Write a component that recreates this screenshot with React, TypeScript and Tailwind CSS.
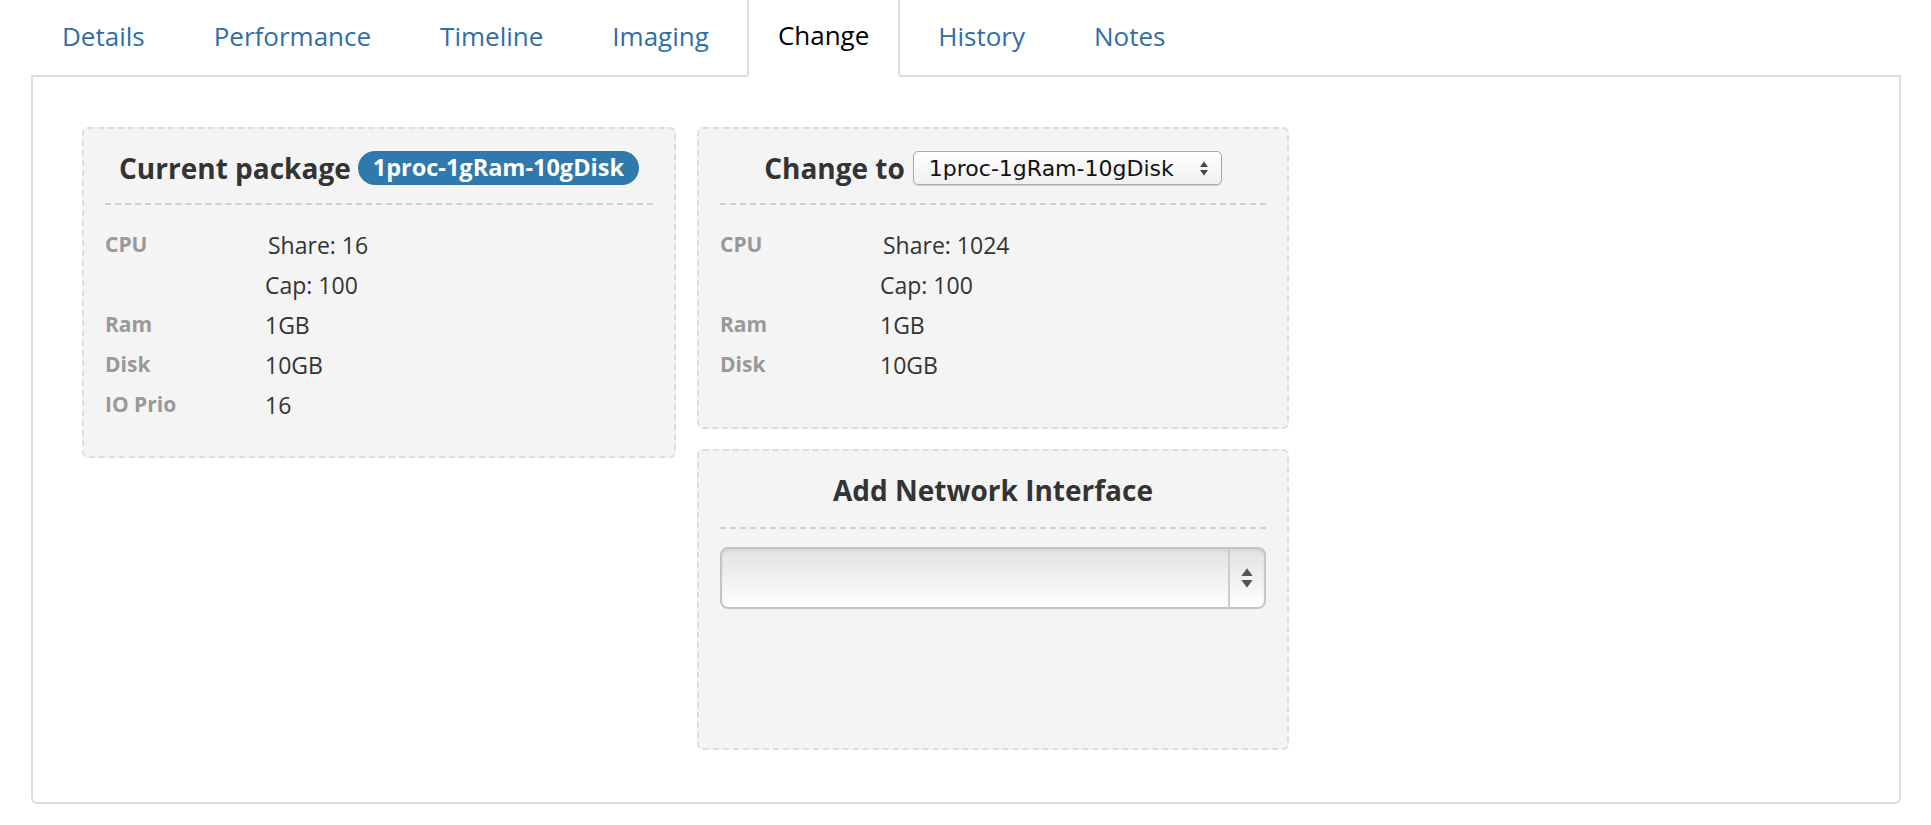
import React from 'react';

const tabs = ['Details', 'Performance', 'Timeline', 'Imaging', 'Change', 'History', 'Notes'];

function Arrows({ className }: { className?: string }) {
  return (
    <svg viewBox="0 0 10 16" className={className} fill="currentColor">
      <path d="M5 1 L9 6.5 L1 6.5 Z" />
      <path d="M5 15 L9 9.5 L1 9.5 Z" />
    </svg>
  );
}

function Row({ label, value, shift }: { label?: string; value: string; shift?: boolean }) {
  return (
    <div className="flex h-[40px] items-center">
      <div className="w-[160px] text-[21px] font-bold text-[#999]">{label}</div>
      <div className={shift ? 'ml-[3px] text-[23px] text-[#333]' : 'text-[23px] text-[#333]'}>{value}</div>
    </div>
  );
}

function Separator() {
  return <div className="border-t-2 border-dashed border-[#d0d0d0]" />;
}

export default function App() {
  return (
    <div className="min-h-screen overflow-hidden bg-white font-['Open_Sans',sans-serif] text-[#333]">
      <div className="pl-[31px] pr-[30px]">
        <ul className="flex border-b-2 border-[#ddd]">
          {tabs.map(t => (
            <li key={t} className="-mb-[2px] mr-[7px]">
              {t === 'Change' ? (
                <a className="flex h-[77px] items-center border-2 border-t-0 border-[#ddd] border-b-white bg-white px-[29px] pb-[4px] text-[26px] text-black">
                  {t}
                </a>
              ) : (
                <a className="flex h-[77px] items-center border-2 border-transparent px-[29px] pb-[4px] text-[26px] text-[#2f6fa6]">
                  {t}
                </a>
              )}
            </li>
          ))}
        </ul>

        <div className="flex items-start gap-[21px] rounded-b-[6px] border-2 border-t-0 border-[#ddd] pb-[52px] pl-[49px] pt-[50px]">
          {/* current package */}
          <div className="h-[331px] w-[594px] rounded-[6px] border-2 border-dashed border-[#ddd] bg-[#f4f4f4] px-[21px] pt-[19px]">
            <div className="flex h-[40px] items-center justify-center">
              <span className="text-[28px] font-bold text-[#333]">Current package</span>
              <span className="ml-[7px] flex h-[34px] items-center rounded-full bg-[#2f79ad] px-[15px] text-[23.5px] font-bold text-white">
                1proc-1gRam-10gDisk
              </span>
            </div>
            <div className="mt-[15px]">
              <Separator />
            </div>
            <div className="mt-[20px]">
              <Row label="CPU" value="Share: 16" shift />
              <Row value="Cap: 100" />
              <Row label="Ram" value="1GB" />
              <Row label="Disk" value="10GB" />
              <Row label="IO Prio" value="16" />
            </div>
          </div>

          <div className="flex w-[592px] flex-col gap-[20px]">
            {/* change to */}
            <div className="h-[302px] rounded-[6px] border-2 border-dashed border-[#ddd] bg-[#f4f4f4] px-[21px] pt-[19px]">
              <div className="flex h-[40px] items-center justify-center">
                <span className="text-[28px] font-bold text-[#333]">Change to</span>
                <div className="ml-[8px] flex h-[34px] w-[309px] items-center justify-between rounded-[5px] border border-[#a9a9a9] bg-gradient-to-b from-white to-[#f0f0f0] pl-[15px] pr-[12px] font-['DejaVu_Sans',sans-serif] text-[22px] text-[#111] shadow-[0_1px_1px_rgba(0,0,0,0.15)]">
                  <span>1proc-1gRam-10gDisk</span>
                  <Arrows className="h-[17px] w-[10px] text-[#444]" />
                </div>
              </div>
              <div className="mt-[15px]">
                <Separator />
              </div>
              <div className="mt-[20px]">
                <Row label="CPU" value="Share: 1024" shift />
                <Row value="Cap: 100" />
                <Row label="Ram" value="1GB" />
                <Row label="Disk" value="10GB" />
              </div>
            </div>

            {/* add nic */}
            <div className="h-[301px] rounded-[6px] border-2 border-dashed border-[#ddd] bg-[#f4f4f4] px-[21px] pt-[19px]">
              <div className="flex h-[40px] items-center justify-center">
                <span className="text-[28px] font-bold text-[#333]">Add Network Interface</span>
              </div>
              <div className="mt-[17px]">
                <Separator />
              </div>
              <div className="mt-[18px] flex h-[62px] overflow-hidden rounded-[8px] border-2 border-[#c4c4c4] bg-gradient-to-b from-[#e2e2e2] via-[#f0f0f0] to-white shadow-[inset_0_2px_3px_rgba(0,0,0,0.06)]">
                <div className="flex-1" />
                <div className="flex w-[36px] items-center justify-center border-l-2 border-[#cdcdcd]">
                  <Arrows className="h-[26px] w-[14px] text-[#555]" />
                </div>
              </div>
            </div>
          </div>
        </div>
      </div>
    </div>
  );
}
